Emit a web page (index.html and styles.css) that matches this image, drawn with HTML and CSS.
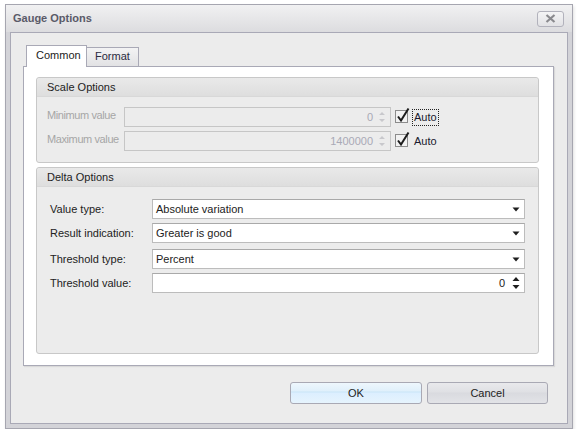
FILE: index.html
```html
<!DOCTYPE html>
<html lang="en">
<head>
  <meta charset="UTF-8">
  <title>Gauge Options</title>
  <link rel="stylesheet" href="styles.css">
</head>
<body>

  <div class="dialog">
    <div class="dialog-title">
      <span class="dialog-caption">Gauge Options</span>
      <button class="close-btn" type="button">
        <svg width="11" height="9" viewBox="0 0 11 9"><path d="M1.5 1 L9.5 8 M9.5 1 L1.5 8" stroke="#8a8a8e" stroke-width="2.2"/></svg>
      </button>
    </div>

    <div class="dialog-body">
      <div class="tab-strip">
        <div class="tab active">Common</div>
        <div class="tab">Format</div>
      </div>

      <div class="tab-page">
        <!-- Scale Options -->
        <div class="group">
          <div class="group-header">Scale Options</div>
          <div class="group-content scale-content">
            <div class="scale-row">
              <label class="label disabled">Minimum value</label>
              <div class="spin-edit disabled">
                <span class="edit-value">0</span>
                <span class="spin-btns">
                  <svg width="8" height="14" viewBox="0 0 8 14"><path d="M1 5 L4 2 L7 5 Z M1 9 L4 12 L7 9 Z" fill="#c8c8cc"/></svg>
                </span>
              </div>
              <span class="check">
                <svg width="16" height="17" viewBox="0 0 16 17"><rect x="0.5" y="3.5" width="12" height="12" fill="#f2f2f2" stroke="#8c8c8c"/><path d="M3 9.5 L6 13.5 L13.5 1.5" fill="none" stroke="#1c1c1c" stroke-width="2"/></svg>
              </span>
              <span class="check-label focused">Auto</span>
            </div>
            <div class="scale-row">
              <label class="label disabled">Maximum value</label>
              <div class="spin-edit disabled">
                <span class="edit-value">1400000</span>
                <span class="spin-btns">
                  <svg width="8" height="14" viewBox="0 0 8 14"><path d="M1 5 L4 2 L7 5 Z M1 9 L4 12 L7 9 Z" fill="#c8c8cc"/></svg>
                </span>
              </div>
              <span class="check">
                <svg width="16" height="17" viewBox="0 0 16 17"><rect x="0.5" y="3.5" width="12" height="12" fill="#f2f2f2" stroke="#8c8c8c"/><path d="M3 9.5 L6 13.5 L13.5 1.5" fill="none" stroke="#1c1c1c" stroke-width="2"/></svg>
              </span>
              <span class="check-label">Auto</span>
            </div>
          </div>
        </div>

        <!-- Delta Options -->
        <div class="group delta-group">
          <div class="group-header">Delta Options</div>
          <div class="group-content delta-content">
            <div class="delta-row">
              <label class="label">Value type:</label>
              <div class="combo">
                <span class="edit-text">Absolute variation</span>
                <svg class="combo-arrow" width="8" height="5" viewBox="0 0 8 5"><path d="M0.5 0.5 L7.5 0.5 L4 4.5 Z" fill="#1e1e1e"/></svg>
              </div>
            </div>
            <div class="delta-row">
              <label class="label">Result indication:</label>
              <div class="combo">
                <span class="edit-text">Greater is good</span>
                <svg class="combo-arrow" width="8" height="5" viewBox="0 0 8 5"><path d="M0.5 0.5 L7.5 0.5 L4 4.5 Z" fill="#1e1e1e"/></svg>
              </div>
            </div>
            <div class="delta-row wide-gap">
              <label class="label">Threshold type:</label>
              <div class="combo">
                <span class="edit-text">Percent</span>
                <svg class="combo-arrow" width="8" height="5" viewBox="0 0 8 5"><path d="M0.5 0.5 L7.5 0.5 L4 4.5 Z" fill="#1e1e1e"/></svg>
              </div>
            </div>
            <div class="delta-row">
              <label class="label">Threshold value:</label>
              <div class="combo spin-combo">
                <span class="edit-value">0</span>
                <svg class="spin-arrows" width="8" height="16" viewBox="0 0 8 16"><path d="M0.5 6 L4 2 L7.5 6 Z M0.5 10 L4 14 L7.5 10 Z" fill="#1e1e1e"/></svg>
              </div>
            </div>
          </div>
        </div>
      </div>

      <div class="buttons">
        <button class="btn btn-ok" type="button">OK</button>
        <button class="btn" type="button">Cancel</button>
      </div>
    </div>
  </div>

</body>
</html>
```

FILE: styles.css
```css
:root {
  --frame: #d3d3d8;
  --client: #ececec;
  --border: #a9a9b6;
  --group-border: #c8c8c8;
  --text: #222;
  --disabled: #a6a6a6;
}

* {
  box-sizing: border-box;
}

body {
  margin: 0;
  padding: 0;
  background-color: #fff;
  font-family: "Liberation Sans", Arial, sans-serif;
  font-size: 11px;
  color: var(--text);
}

/* Window */
.dialog {
  margin: 4px 0 0 5px;
  width: 568px;
  height: 425px;
  border: 1px solid #a6a6b0;
  background-color: var(--frame);
  box-shadow: 1px 2px 3px rgba(0, 0, 0, 0.12);
  display: flex;
  flex-direction: column;
}

.dialog-title {
  height: 27px;
  flex-shrink: 0;
  display: flex;
  align-items: center;
  justify-content: space-between;
  padding: 0 8px 2px 7px;
  background: linear-gradient(to bottom, #f1f1f2, #dcdcdf);
}

.dialog-caption {
  font-weight: bold;
  color: #5a5a68;
}

.close-btn {
  width: 27px;
  height: 16px;
  margin-top: 2px;
  padding: 0;
  border: 1px solid #b2b2bc;
  border-radius: 3px;
  background: linear-gradient(to bottom, #f4f4f5, #e2e2e5);
  display: flex;
  align-items: center;
  justify-content: center;
}

.dialog-body {
  flex: 1;
  margin: 0 4px 4px 4px;
  border: 1px solid var(--border);
  background-color: var(--client);
  padding: 12px 13px 0 12px;
}

/* Tabs */
.tab-strip {
  display: flex;
  align-items: flex-end;
  height: 21px;
  padding-left: 3px;
  position: relative;
  z-index: 1;
}

.tab {
  border: 1px solid var(--border);
  border-bottom: none;
  color: var(--text);
  white-space: nowrap;
}

.tab.active {
  width: 61px;
  height: 22px;
  margin-bottom: -1px;
  padding: 3px 0 0 9px;
  background-color: #fff;
}

.tab:not(.active) {
  width: 52px;
  height: 19px;
  border-left: none;
  padding: 2px 0 0 8px;
  background: linear-gradient(to bottom, #f3f3f4, #e2e2e4);
  color: #2a2a40;
}

.tab-page {
  height: 300px;
  border: 1px solid var(--border);
  background-color: #fff;
  padding: 10px 14px 11px 12px;
  display: flex;
  flex-direction: column;
  gap: 4px;
  box-shadow: 1px 1px 1px rgba(0, 0, 0, 0.08);
}

/* Group boxes */
.group {
  border: 1px solid var(--group-border);
  border-radius: 3px;
  background-color: var(--client);
}

.delta-group {
  flex: 1;
}

.group-header {
  height: 19px;
  padding: 3px 0 0 10px;
  border-bottom: 1px solid #d8d8d8;
  border-radius: 3px 3px 0 0;
  background: linear-gradient(to bottom, #e9e9e9, #dedede);
}

.group-content {
  display: flex;
  flex-direction: column;
  gap: 4px;
}

.scale-content {
  padding: 10px 0 11px 10px;
}

.delta-content {
  padding: 12px 0 0 13px;
}

.label {
  flex-shrink: 0;
  white-space: nowrap;
}

.label.disabled {
  color: var(--disabled);
}

.scale-row {
  display: flex;
  align-items: center;
  height: 20px;
}

.scale-row .label {
  width: 77px;
  margin-top: -4px;
  letter-spacing: -0.4px;
}

.spin-edit {
  width: 267px;
  height: 20px;
  border: 1px solid #c6c6c6;
  display: flex;
  align-items: center;
  justify-content: flex-end;
  padding-right: 4px;
}

.spin-edit.disabled {
  color: #a9a9b6;
}

.spin-btns {
  display: flex;
  margin-left: 5px;
}

.check {
  display: flex;
  margin: -4px 0 0 4px;
}

.check-label {
  margin-left: 1px;
  padding: 1px 1px 2px 1px;
  border: 1px solid transparent;
  color: #1a1a2e;
}

.check-label.focused {
  border: 1px dotted #222;
}

.delta-row {
  display: flex;
  align-items: center;
  height: 20px;
}

.delta-row.wide-gap {
  margin-top: 2px;
}

.delta-row .label {
  width: 102px;
}

.combo {
  width: 373px;
  height: 20px;
  border: 1px solid #bcbcbc;
  border-top-color: #a9a9a9;
  background-color: #fff;
  display: flex;
  align-items: center;
  justify-content: space-between;
  padding: 0 4px 0 3px;
}

.spin-combo {
  justify-content: flex-end;
}

.spin-combo .spin-arrows {
  margin-left: 7px;
}

/* Buttons */
.buttons {
  display: flex;
  justify-content: flex-end;
  gap: 5px;
  margin-top: 16px;
  padding-right: 6px;
}

.btn {
  width: 121px;
  height: 22px;
  padding: 0;
  border: 1px solid #a9a9b4;
  border-radius: 3px;
  font-family: inherit;
  font-size: 11px;
  color: var(--text);
  background: linear-gradient(to bottom, #e9e9ec 0%, #dfe0e4 45%, #d9dadf 50%, #e2e3e7 100%);
}

.btn-ok {
  width: 132px;
  background: linear-gradient(to bottom, #eef7fd 0%, #e0f0fb 40%, #c9e5f7 45%, #dcefff 50%, #e6f4fd 100%);
}
```
